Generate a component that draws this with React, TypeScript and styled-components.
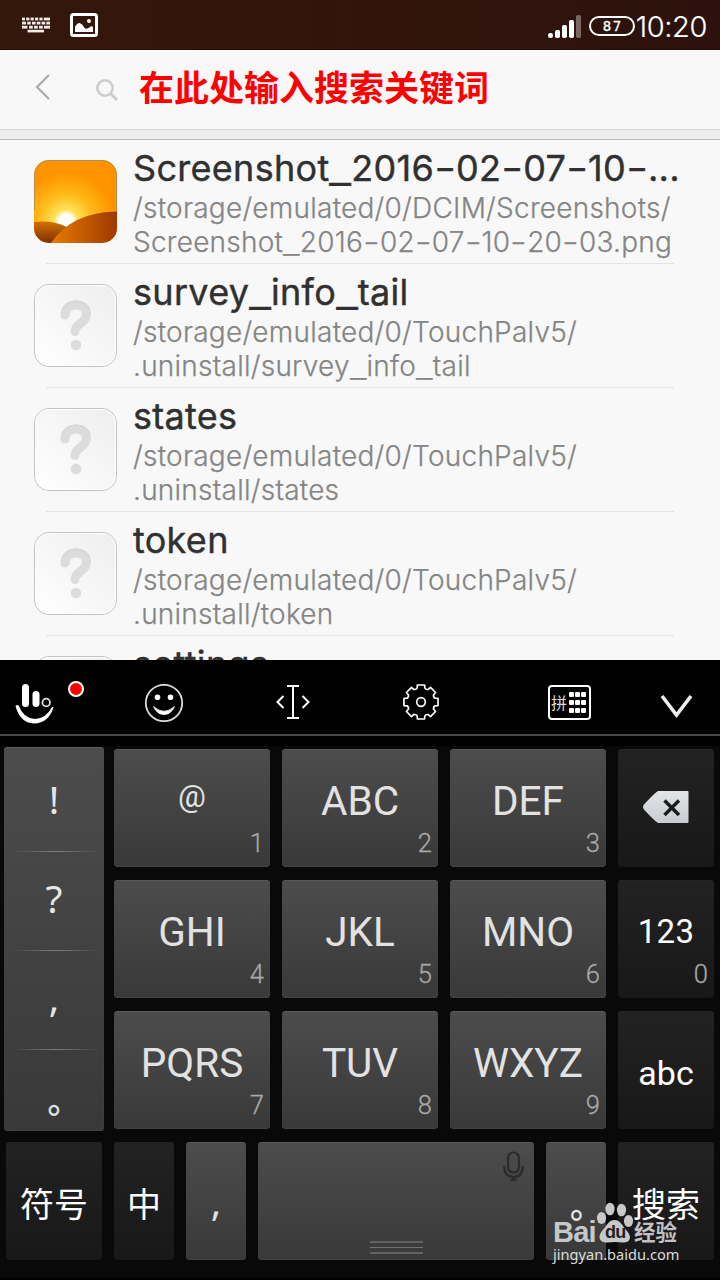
import React from "react";
import styled, { createGlobalStyle, css } from "styled-components";

const cjk = '"Noto Sans CJK SC", sans-serif';

const GlobalStyle = createGlobalStyle`
  *, *::before, *::after { box-sizing: border-box; }
  body { margin: 0; background: #000; }
`;

const Screen = styled.main`
  position: relative;
  width: 720px;
  height: 1280px;
  overflow: hidden;
  display: flex;
  flex-direction: column;
  background: #f8f8f8;
  font-family: Inter, ${cjk};
`;

const StatusBar = styled.header`
  flex: none;
  height: 50px;
  display: flex;
  align-items: center;
  padding: 0 13px 0 21px;
  color: #fff;
  background: linear-gradient(90deg, #34180c, #34130b 45%, #2f150d 70%, #2c110c);
  border-bottom: 1px solid #260d07;
`;

const StatusIcons = styled.div`
  display: flex;
  align-items: center;
  gap: 19px;
  flex: 1;
`;

const Glyph = styled.svg`
  display: block;
  flex: none;
  overflow: visible;
`;

const Signal = styled(Glyph)`
  margin-top: 4px;
`;

const Battery = styled.div`
  width: 46px;
  height: 20px;
  margin: 3px 1px 0 8px;
  border: 2px solid #fff;
  border-radius: 10px;
  display: flex;
  align-items: center;
  justify-content: center;
  font: 400 14px/16px "DejaVu Sans Mono", monospace;
  -webkit-text-stroke: 0.3px #fff;
  letter-spacing: 1.5px;
  padding-left: 2px;
`;

const Clock = styled.time`
  font-weight: 300;
  font-size: 29px;
  line-height: 48px;
  letter-spacing: -0.4px;
  padding-top: 4px;
  -webkit-text-stroke: 0.2px #fff;
`;

const SearchBar = styled.div`
  flex: none;
  height: 80px;
  display: flex;
  align-items: center;
  padding: 0 0 6px 35px;
  border-bottom: 1px solid #dadada;
`;

const BackGlyph = styled(Glyph)`
  margin-right: 46px;
`;

const SearchGlyph = styled(Glyph)`
  margin-top: 6px;
`;

const SearchHint = styled.div`
  margin: 0 0 1px 21px;
  color: #f00;
  font: 700 35px/50px ${cjk};
`;

const Strip = styled.div`
  flex: none;
  height: 10px;
  background: #eee;
  border-bottom: 1px solid #bbb;
`;

const FileList = styled.section`
  flex: none;
  height: 520px;
  overflow: hidden;
`;

const FileRow = styled.article`
  position: relative;
  height: 124px;
  display: flex;
  padding: 0 36px 0 34px;
  &::after {
    content: "";
    position: absolute;
    left: 46px;
    right: 46px;
    bottom: 0;
    height: 1px;
    background: #e4e4e4;
  }
`;

const Thumb = styled.div`
  flex: none;
  width: 83px;
  height: 83px;
  margin: 20px 16px 0 0;
`;

const FileText = styled.div`
  flex: 1;
  padding-top: 6px;
  white-space: nowrap;
`;

const FileName = styled.h2`
  margin: 0 0 1px;
  font-weight: 400;
  font-size: 36px;
  line-height: 44px;
  color: #303030;
  -webkit-text-stroke: 0.4px #303030;
  letter-spacing: 0.3px;
`;

const PathLine = styled.div`
  font-weight: 300;
  font-size: 28px;
  line-height: 34px;
  color: #858585;
  -webkit-text-stroke: 0.25px #858585;
  letter-spacing: 0.24px;
`;

const WideMark = styled.span<{ $drop: number }>`
  display: inline-block;
  margin: 0 0.07em;
  transform: translateY(${(p) => p.$drop}em) scaleX(1.32);
`;

const Toolbar = styled.nav`
  position: relative;
  flex: none;
  height: 76px;
  background: #000;
  border-bottom: 2px solid #484848;
  display: grid;
  grid-template-columns: 100px 128px 128px 128px 170px 66px;
  align-items: center;
`;

const Tool = styled.div<{ $left: number; $drop?: number }>`
  padding-left: ${(p) => p.$left}px;
  padding-top: ${(p) => p.$drop ?? 10}px;
`;

const Badge = styled.span`
  position: absolute;
  left: 68px;
  top: 21px;
  width: 16px;
  height: 16px;
  border: 2px solid #fff;
  border-radius: 50%;
  background: #f00;
`;

const Pad = styled.div`
  width: 43px;
  height: 35px;
  border: 2px solid #fff;
  border-radius: 4px;
  display: flex;
  align-items: center;
  gap: 2px;
  padding-left: 1px;
  color: #ddd;
  font: 400 16px/20px ${cjk};
`;

const Dots = styled.div`
  display: grid;
  grid-template-columns: repeat(3, 5px);
  grid-auto-rows: 5px;
  gap: 3px 1px;
`;

const Dot = styled.i`
  background: #fff;
  border-radius: 1px;
`;

const Keyboard = styled.section`
  flex: none;
  height: 544px;
  border-top: 10px solid #000;
  border-bottom: 2px solid #000;
  background: #090909;
  padding: 1px 6px 0 4px;
`;

const UpperKeys = styled.div`
  display: flex;
  gap: 10px;
`;

const light = css`
  background: linear-gradient(#4c4c4c, #393939);
  box-shadow: inset 0 1px 1px #5b5b5b, inset 0 -1px 1px #444;
`;
const dark = css`
  background: linear-gradient(#222, #181818);
  box-shadow: inset 0 1px 1px #262626;
`;

const Punctuation = styled.div`
  ${light}
  width: 100px;
  height: 384px;
  border-radius: 4px;
  display: grid;
  grid-template-rows: 105px 99px 99px 81px;
`;

const Mark = styled.div<{ $shift: number }>`
  position: relative;
  display: flex;
  justify-content: center;
  padding-top: ${(p) => p.$shift}px;
  color: #e6e6e6;
  font: 400 39px/53px "Noto Sans", ${cjk};
  &:not(:last-child)::after {
    content: "";
    position: absolute;
    bottom: 0;
    left: 10px;
    right: 6px;
    height: 1px;
    background: linear-gradient(90deg, transparent, #808080 50%, transparent);
  }
`;

const FullStop = styled.span<{ $top: number; $left: number }>`
  font: 400 33px/50px ${cjk};
  color: #e6e6e6;
  -webkit-text-stroke: 0.4px #e6e6e6;
  margin-top: ${(p) => p.$top}px;
  margin-left: ${(p) => p.$left}px;
`;

const KeyGrid = styled.div`
  display: grid;
  grid-template-columns: 156px 156px 156px 96px;
  grid-auto-rows: 118px;
  gap: 13px 12px;
  padding-top: 2px;
`;

const BottomKeys = styled.div`
  display: grid;
  grid-template-columns: 96px 60px 60px 276px 60px 96px;
  gap: 12px;
  height: 118px;
  margin: 11px 0 0 2px;
`;

const Key = styled.div<{ $dark?: boolean }>`
  ${(p) => (p.$dark ? dark : light)}
  position: relative;
  border-radius: 4px;
  display: flex;
  justify-content: center;
`;

const Label = styled.span<{ $size?: number; $top?: number; $face?: string; $white?: boolean; $track?: number }>`
  font-family: ${(p) => p.$face ?? "Roboto"}, ${cjk};
  font-size: ${(p) => p.$size ?? 40.5}px;
  line-height: 50px;
  letter-spacing: ${(p) => p.$track ?? 0}px;
  margin-top: ${(p) => p.$top ?? 27}px;
  color: ${(p) => (p.$white ? "#fff" : "#e2e2e2")};
  white-space: nowrap;
`;

const Digit = styled.span`
  position: absolute;
  right: 6px;
  bottom: 9px;
  font: 300 25.5px/30px Roboto, sans-serif;
  -webkit-text-stroke: 0.3px #a8a8a8;
  color: #a8a8a8;
`;

const DeleteGlyph = styled(Glyph)`
  margin-top: 42px;
`;

const Mic = styled(Glyph)`
  position: absolute;
  right: 10px;
  top: 9px;
`;

const Grip = styled.div`
  position: absolute;
  left: 112px;
  bottom: 6px;
  width: 53px;
  height: 13px;
  border-top: 2px solid #626262;
  border-bottom: 2px solid #626262;
  display: flex;
  align-items: center;
  &::after {
    content: "";
    width: 100%;
    height: 1px;
    background: #707070;
  }
`;

const Watermark = styled.aside`
  position: absolute;
  left: 553px;
  top: 1202px;
  width: 130px;
  color: rgba(225, 225, 225, 0.85);
`;

const Brand = styled.div`
  display: flex;
  height: 42px;
  align-items: flex-end;
`;

const BrandBai = styled.span`
  width: 44px;
  font: 700 29px/32px "Liberation Sans", sans-serif;
  letter-spacing: -0.8px;
  margin-bottom: -4px;
`;

const Paw = styled.div`
  position: relative;
  width: 37px;
  height: 42px;
`;

const Du = styled.span`
  position: absolute;
  left: 8px;
  top: 19px;
  font: 700 18px/22px "Liberation Sans", sans-serif;
  letter-spacing: -0.8px;
  color: #222;
`;

const BrandName = styled.span`
  font: 700 21.5px/26px ${cjk};
`;

const Site = styled.div`
  font: 400 14.6px/20px "Noto Sans", sans-serif;
  color: #dcdcdc;
`;

const KeyboardGlyph = () => (
  <Glyph width="30" height="16" viewBox="0 0 30 16" fill="#f0ece8">
    {[
      [[1, 3], [5.2, 3.2], [9.6, 3.2], [14, 3.2], [18.4, 3.2], [22.8, 6.2]],
      [[1, 4], [6.2, 3.6], [11, 3.6], [15.8, 3.6], [20.6, 3.6], [25.4, 3.6]],
      [[1, 5.4], [8, 3.8], [13, 3.8], [18, 3.8], [23, 6]],
    ].map((row, r) =>
      row.map(([x, w]) => <rect key={`${r}-${x}`} x={x} y={0.6 + r * 4.1} width={w} height="2.8" />)
    )}
    <rect x="6.500" y="12.800" width="16.500" height="2.600" />
  </Glyph>
);

const PictureGlyph = () => (
  <Glyph width="28" height="24" viewBox="0 0 28 24">
    <rect x="1.500" y="1.500" width="25" height="21" rx="2" fill="none" stroke="#fff" strokeWidth="3" />
    <path d="M5 19V14Q7 10 9.500 10Q12 10.400 14 14.200Q16 17 18.500 15L21.500 13L23 14V19z" fill="#fff" />
    <circle cx="19" cy="8" r="2" fill="#fff" />
  </Glyph>
);

const SignalGlyph = () => (
  <Signal width="33" height="23" viewBox="0 0 33 23" fill="#fff">
    <rect x="0" y="18" width="5" height="5" rx="2.200" />
    <rect x="7" y="15" width="5" height="8" rx="1.800" />
    <rect x="14" y="10" width="5" height="13" rx="1.800" />
    <rect x="21" y="5" width="5" height="18" rx="1.800" />
    <rect x="28" y="0" width="5" height="23" rx="1.800" opacity="0.35" />
  </Signal>
);

const SunsetThumb = () => (
  <Glyph width="83" height="83" viewBox="0 0 83 83">
    <defs>
      <radialGradient id="sky" gradientUnits="userSpaceOnUse" cx="32" cy="61" r="48">
        <stop offset="0" stopColor="#fffbd0" />
        <stop offset="0.22" stopColor="#ffe45f" />
        <stop offset="0.55" stopColor="#ffbb1a" />
        <stop offset="1" stopColor="#ff9400" />
      </radialGradient>
      <radialGradient id="sun" gradientUnits="userSpaceOnUse" cx="32" cy="62" r="12">
        <stop offset="0.6" stopColor="#fff" />
        <stop offset="1" stopColor="#fff" stopOpacity="0" />
      </radialGradient>
      <linearGradient id="hillBack" x1="0" y1="0" x2="0" y2="1">
        <stop offset="0" stopColor="#d07000" />
        <stop offset="1" stopColor="#803000" />
      </linearGradient>
      <linearGradient id="hillFront" x1="0" y1="0" x2="1" y2="0">
        <stop offset="0" stopColor="#e87b00" />
        <stop offset="1" stopColor="#9c3900" />
      </linearGradient>
      <clipPath id="tile">
        <rect width="83" height="83" rx="15" />
      </clipPath>
    </defs>
    <g clipPath="url(#tile)">
      <rect width="83" height="83" fill="url(#sky)" />
      <circle cx="32" cy="62" r="12" fill="url(#sun)" />
      <path d="M0 62Q18 60 33 67L26 83H0z" fill="url(#hillBack)" />
      <path d="M17 83Q38 52 83 51.500V83z" fill="url(#hillFront)" />
    </g>
    <path d="M.5 50V15A14.500 14.500 0 0 1 15 .5H68A14.500 14.500 0 0 1 82.500 15V50" fill="none" stroke="#a88a60" strokeOpacity=".8" />
  </Glyph>
);

const UnknownThumb = () => (
  <Glyph width="83" height="83" viewBox="0 0 83 83">
    <defs>
      <linearGradient id="paper" x1="0" y1="1" x2="1" y2="0">
        <stop offset="0" stopColor="#fff" />
        <stop offset="1" stopColor="#eee" />
      </linearGradient>
    </defs>
    <rect x=".5" y=".5" width="82" height="82" rx="14.500" fill="url(#paper)" stroke="#c2c2c2" />
    <rect x="1.500" y="1.500" width="80" height="80" rx="13.500" fill="none" stroke="#fff" />
    <path d="M31 31C31 17.500 52.500 18 52.500 30C52.500 39.500 41 39 41 47.500" fill="none" stroke="#dcdcdc" strokeWidth="9" strokeLinecap="round" />
    <path d="M28 26Q32 17 42 17Q53 17.500 56 26" fill="none" stroke="#cfcfcf" strokeWidth=".8" />
    <circle cx="42" cy="61" r="5.200" fill="#dcdcdc" />
  </Glyph>
);

const toothAngles: [number, number][] = [[-15, 14.6], [-12, 17.4], [12, 17.4], [15, 14.6]];

const polar = (deg: number, r: number) => {
  const t = ((deg - 90) * Math.PI) / 180;
  return `${(18 + r * Math.cos(t)).toFixed(2)} ${(18 + r * Math.sin(t)).toFixed(2)}`;
};

const gearPath = Array.from({ length: 8 }, (_, i) => {
  const base = i * 45;
  const tooth = toothAngles.map(([a, r], n) => `${i === 0 && n === 0 ? "M" : "L"}${polar(base + a, r)}`).join("");
  return `${tooth}Q${polar(base + 22.5, 13)} ${polar(base + 30, 14.6)}`;
}).join("") + "z";

const files = [
  {
    name: "Screenshot_2016-02-07-10-...",
    path: ["/storage/emulated/0/DCIM/Screenshots/", "Screenshot_2016-02-07-10-20-03.png"],
    image: true,
  },
  { name: "survey_info_tail", path: ["/storage/emulated/0/TouchPalv5/", ".uninstall/survey_info_tail"] },
  { name: "states", path: ["/storage/emulated/0/TouchPalv5/", ".uninstall/states"] },
  { name: "token", path: ["/storage/emulated/0/TouchPalv5/", ".uninstall/token"] },
  { name: "settings", path: [] },
];

// Hyphens and underscores are set wider than the rest of the face.
const withWideMarks = (text: string) =>
  text.split(/([-_])/).map((part, i) =>
    part === "-" || part === "_" ? (
      <WideMark key={i} $drop={part === "_" ? 0.055 : 0}>{part}</WideMark>
    ) : (
      part
    )
  );

const letters = [
  ["@", "ABC", "DEF"],
  ["GHI", "JKL", "MNO"],
  ["PQRS", "TUV", "WXYZ"],
];

const sideKeys = [
  <Key $dark key="delete">
    <DeleteGlyph width="46" height="32" viewBox="0 0 46 32">
      <defs>
        <linearGradient id="del" x1="0" y1="0" x2="0" y2="1">
          <stop stopColor="#e2e5e8" />
          <stop offset="1" stopColor="#c9cdd1" />
        </linearGradient>
      </defs>
      <path d="M15 0H44.500Q45.500 0 45.500 1V31Q45.500 32 44.500 32H15Q11 29.500 1 18.500Q-1 16 1 13.500Q11 2.500 15 0z" fill="url(#del)" />
      <path d="M21.500 9.500L36 24M36 9.500L21.500 24" stroke="#1b1b1b" strokeWidth="3.500" />
    </DeleteGlyph>
  </Key>,
  <Key $dark key="numbers">
    <Label $size={33} $white $track={0.3}>123</Label>
    <Digit>0</Digit>
  </Key>,
  <Key $dark key="latin">
    <Label $size={34} $white $top={37}>abc</Label>
  </Key>,
];

const PinyinPad = () => (
  <Pad>
    拼
    <Dots>
      {Array.from({ length: 9 }, (_, i) => (
        <Dot key={i} />
      ))}
    </Dots>
  </Pad>
);

export default function App() {
  return (
    <Screen>
      <GlobalStyle />
      <StatusBar>
        <StatusIcons>
          <KeyboardGlyph />
          <PictureGlyph />
        </StatusIcons>
        <SignalGlyph />
        <Battery>87</Battery>
        <Clock>10:20</Clock>
      </StatusBar>

      <SearchBar>
        <BackGlyph width="15" height="26" viewBox="0 0 15 26">
          <path d="M14 1L2 13L14 25" fill="none" stroke="#aaa" strokeWidth="2.200" />
        </BackGlyph>
        <SearchGlyph width="22" height="22" viewBox="0 0 22 22">
          <circle cx="9" cy="9" r="7.700" fill="none" stroke="#ccc" strokeWidth="2.400" />
          <path d="M14.500 14.500L21 21" stroke="#ccc" strokeWidth="3" />
        </SearchGlyph>
        <SearchHint>在此处输入搜索关键词</SearchHint>
      </SearchBar>
      <Strip />

      <FileList>
        {files.map((f) => (
          <FileRow key={f.name}>
            <Thumb>{f.image ? <SunsetThumb /> : <UnknownThumb />}</Thumb>
            <FileText>
              <FileName>{withWideMarks(f.name)}</FileName>
              {f.path.map((line) => (
                <PathLine key={line}>{withWideMarks(line)}</PathLine>
              ))}
            </FileText>
          </FileRow>
        ))}
      </FileList>

      <Toolbar>
        <Tool $left={15} $drop={13}>
          <Glyph width="39" height="40" viewBox="0 0 39 40">
            <rect x="7" y="0" width="7" height="23" rx="3.500" fill="#fff" />
            <rect x="17.500" y="7" width="7" height="16" rx="3.500" fill="#fff" />
            <circle cx="31.200" cy="18.500" r="3.800" fill="none" stroke="#ddd" strokeWidth="1.800" />
            <path d="M.5 22Q2 20 4 22Q8 34 20 35Q31 34.500 37 23L38.500 23Q34 39 19 39.500Q5 39 .5 22z" fill="#fff" />
          </Glyph>
          <Badge />
        </Tool>
        <Tool $left={45} $drop={11}>
          <Glyph width="38" height="38" viewBox="0 0 38 38">
            <circle cx="19" cy="19" r="18.200" fill="none" stroke="#ddd" strokeWidth="1.800" />
            <circle cx="12.500" cy="13.300" r="2.800" fill="#fff" />
            <circle cx="25.500" cy="13.300" r="2.800" fill="#fff" />
            <path d="M8.500 22.500Q19 32 29.500 22.500Q26 30.500 19 30.500Q12 30.500 8.500 22.500z" fill="#fff" stroke="#fff" strokeWidth=".8" />
          </Glyph>
        </Tool>
        <Tool $left={48}>
          <Glyph width="34" height="34" viewBox="0 0 34 34" fill="none" stroke="#fff" strokeWidth="2">
            <path d="M11 1H23M17 1V33M11 33H23" />
            <path d="M7.500 11L1.500 17L7.500 23M26.500 11L32.500 17L26.500 23" />
          </Glyph>
        </Tool>
        <Tool $left={47}>
          <Glyph width="36" height="36" viewBox="0 0 36 36" fill="none" stroke="#fff" strokeWidth="1.700" strokeLinejoin="round">
            <path d={gearPath} />
            <circle cx="18" cy="18" r="4.300" />
          </Glyph>
        </Tool>
        <Tool $left={64}>
          <PinyinPad />
        </Tool>
        <Tool $left={6} $drop={18}>
          <Glyph width="33" height="23" viewBox="0 0 33 23">
            <path d="M2 1L16.500 20L31 1" fill="none" stroke="#eee" strokeWidth="3.600" />
          </Glyph>
        </Tool>
      </Toolbar>

      <Keyboard>
        <UpperKeys>
          <Punctuation>
            <Mark $shift={25}>!</Mark>
            <Mark $shift={19}>?</Mark>
            <Mark $shift={19}>,</Mark>
            <Mark $shift={24}>
              <FullStop $top={0} $left={20}>。</FullStop>
            </Mark>
          </Punctuation>
          <KeyGrid>
            {letters.map((row, r) => (
              <React.Fragment key={r}>
                {row.map((text, c) => (
                  <Key key={text}>
                    {text === "@" ? <Label $size={31} $top={23}>@</Label> : <Label>{text}</Label>}
                    <Digit>{r * 3 + c + 1}</Digit>
                  </Key>
                ))}
                {sideKeys[r]}
              </React.Fragment>
            ))}
          </KeyGrid>
        </UpperKeys>
        <BottomKeys>
          <Key $dark><Label $size={34} $white $top={38}>符号</Label></Key>
          <Key $dark><Label $size={34} $white $top={38}>中</Label></Key>
          <Key><Label $size={39} $face={'"Noto Sans"'} $top={34}>,</Label></Key>
          <Key>
            <Mic width="21" height="31" viewBox="0 0 21 31" fill="none" stroke="#2b2b2b" strokeWidth="2.200">
              <rect x="5" y="1.500" width="11" height="20" rx="5.500" />
              <path d="M1.200 15Q1.200 26 10.500 26Q19.800 26 19.800 15M10.500 26V29M7 29H14" />
            </Mic>
            <Grip />
          </Key>
          <Key><FullStop $top={37} $left={21}>。</FullStop></Key>
          <Key $dark><Label $size={34} $white $top={38}>搜索</Label></Key>
        </BottomKeys>
      </Keyboard>

      <Watermark>
        <Brand>
          <BrandBai>Bai</BrandBai>
          <Paw>
            <Glyph width="37" height="42" viewBox="0 0 37 42" fill="#c8c8c8">
              <ellipse cx="4.500" cy="16" rx="4.600" ry="6" />
              <ellipse cx="13" cy="7" rx="4.600" ry="6.300" />
              <ellipse cx="24.500" cy="8" rx="4.600" ry="6.300" />
              <ellipse cx="31.500" cy="19" rx="4.600" ry="6" />
              <path d="M17.500 18C24 18 25 24 30 29C36 36 32 41 26 40.500Q18 39.500 10 40.500C3 41 0 35 5 29C10 24 11 18 17.500 18z" />
            </Glyph>
            <Du>du</Du>
          </Paw>
          <BrandName>经验</BrandName>
        </Brand>
        <Site>jingyan.baidu.com</Site>
      </Watermark>
    </Screen>
  );
}
